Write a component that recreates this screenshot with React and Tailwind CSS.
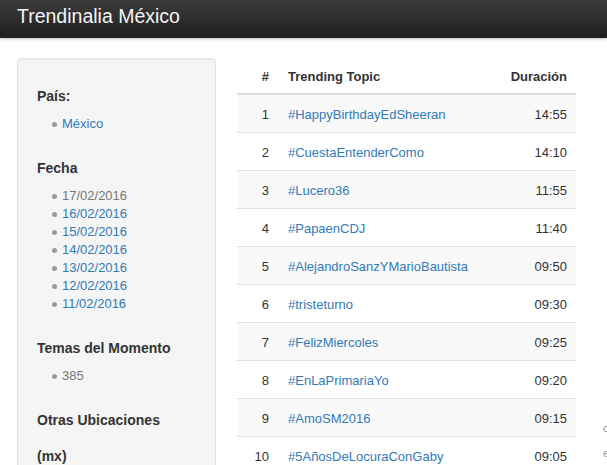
const dates = [
  { d: '17/02/2016', active: true },
  { d: '16/02/2016' },
  { d: '15/02/2016' },
  { d: '14/02/2016' },
  { d: '13/02/2016' },
  { d: '12/02/2016' },
  { d: '11/02/2016' },
]

const topics = [
  ['#HappyBirthdayEdSheeran', '14:55'],
  ['#CuestaEntenderComo', '14:10'],
  ['#Lucero36', '11:55'],
  ['#PapaenCDJ', '11:40'],
  ['#AlejandroSanzYMarioBautista', '09:50'],
  ['#tristeturno', '09:30'],
  ['#FelizMiercoles', '09:25'],
  ['#EnLaPrimariaYo', '09:20'],
  ['#AmoSM2016', '09:15'],
  ['#5AñosDeLocuraConGaby', '09:05'],
]

function Bullet({ children, className }) {
  return (
    <li className="flex items-center h-[18px] pt-[2px]">
      <span className="w-[5px] h-[5px] rounded-full bg-[#999] mr-[5px]" />
      <span className={className}>{children}</span>
    </li>
  )
}

function Heading({ children }) {
  return <h5 className="text-[14px] font-bold leading-[20px] text-[#333] mb-2">{children}</h5>
}

export default function App() {
  return (
    <div className="w-[607px] h-[465px] overflow-hidden bg-white text-[#333]"
      style={{ fontFamily: '"Liberation Sans", Arial, sans-serif' }}>
      <div className="h-[38px] bg-gradient-to-b from-[#3c3c3c] to-[#1f1f1f] flex items-center px-[17px] pb-1 shadow-[0_1px_3px_rgba(0,0,0,0.25)]">
        <span className="text-[19.5px] text-[#f4f4f4] leading-none">Trendinalia México</span>
      </div>

      <div className="flex pt-[20px] pl-[17px]">
        {/* sidebar */}
        <div className="w-[199px] shrink-0 h-[420px] bg-[#f5f5f5] border border-[#e3e3e3] rounded-[4px] shadow-[inset_0_1px_1px_rgba(0,0,0,0.05)] px-[19px] pt-[27px]">
          <Heading>País:</Heading>
          <ul className="pl-[15px] text-[13px] mb-[26px]">
            <Bullet className="text-[#337ab7]">México</Bullet>
          </ul>

          <Heading>Fecha</Heading>
          <ul className="pl-[15px] text-[13px] mb-[26px]">
            {dates.map(item => (
              <Bullet key={item.d} className={item.active ? 'text-[#777]' : 'text-[#337ab7]'}>
                {item.d}
              </Bullet>
            ))}
          </ul>

          <Heading>Temas del Momento</Heading>
          <ul className="pl-[15px] text-[13px] mb-[26px]">
            <Bullet className="text-[#777]">385</Bullet>
          </ul>

          <h5 className="text-[14px] font-bold leading-[20px] mb-4">Otras Ubicaciones</h5>
          <h5 className="text-[14px] font-bold leading-[20px]">(mx)</h5>
        </div>

        {/* table */}
        <div className="ml-[21px] w-[339px] shrink-0 text-[13px]">
          <div className="flex items-center h-[37px] pt-[2px] border-b-2 border-[#ddd] font-bold">
            <div className="w-[41px] text-right pr-[9px]">#</div>
            <div className="flex-1 pl-[10px]">Trending Topic</div>
            <div className="pr-[9px]">Duración</div>
          </div>
          {topics.map(([t, time], i) => (
            <div key={t}
              className={`flex items-center h-[38px] pt-[2px] border-b border-[#ddd] ${i % 2 === 0 ? 'bg-[#f9f9f9]' : 'bg-white'}`}>
              <div className="w-[41px] text-right pr-[9px]">{i + 1}</div>
              <div className="flex-1 pl-[10px] text-[#337ab7]">{t}</div>
              <div className="pr-[9px]">{time}</div>
            </div>
          ))}
        </div>

        {/* clipped right column */}
        <div className="ml-[27px] shrink-0 w-[40px] text-[11px] text-[#999] pt-[358px] leading-[25px]">
          <div>c</div>
          <div>e</div>
        </div>
      </div>
    </div>
  )
}
